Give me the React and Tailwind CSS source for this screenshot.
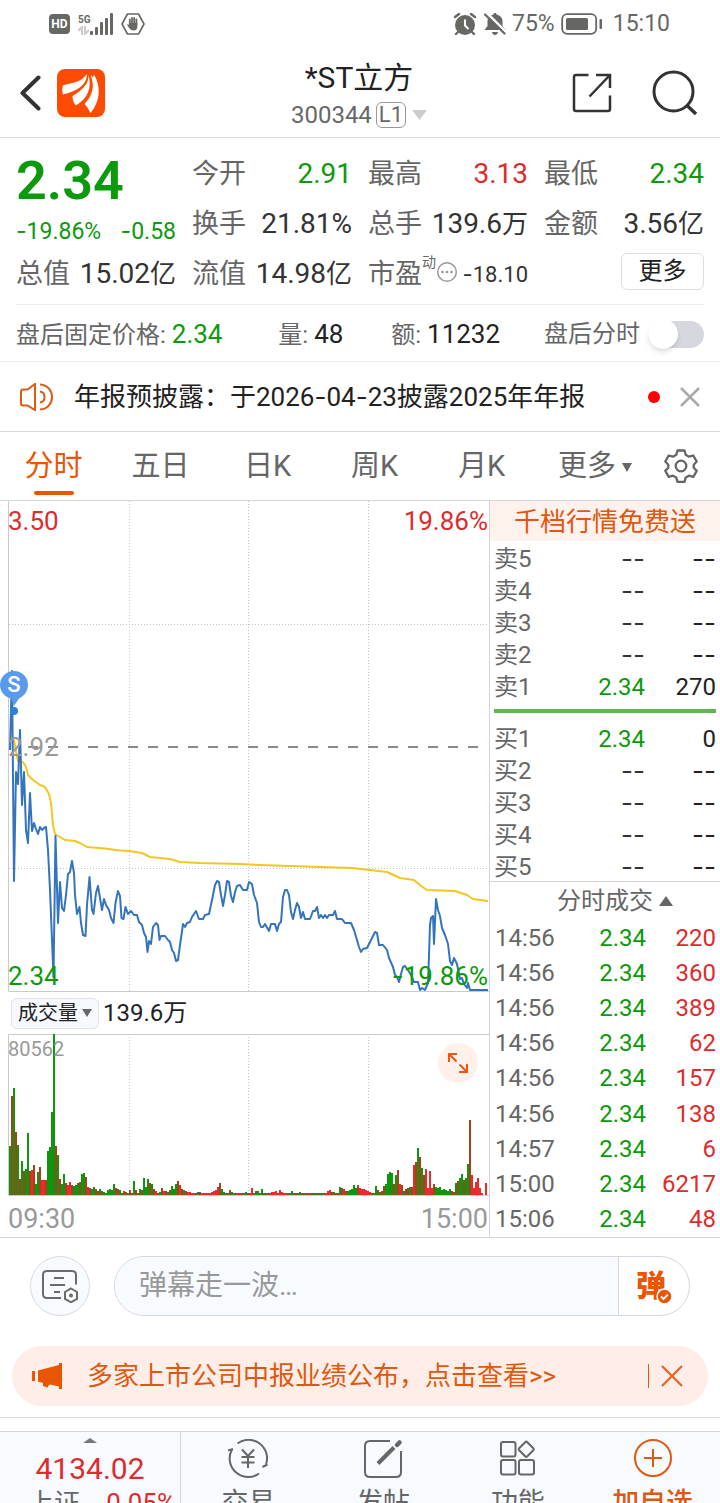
import { useState } from "react";

const PRICE_LINE =
  "10,750 12,671 14,881 16,772 18,784 20,730 22,805 24,772 26,830 28,843 30,793 32,831 34,823 36,829 38,834 40,827 42,830 44,828 46,827 48,850 50,890 52,940 53.5,977 55.5,836 58,923 60,882 62,908 64,911 66,895 68,874 70,872 72,861 74,873 75,895 77,914 79.5,907 81,923 83,935 85.5,936 87,905 89.5,877 92,910 93.5,914 96,893 98,886 100,898 102,910 104,899 106,905 109,910 111,918 113.5,923 115.5,903 118,891 120,896 121.5,918 123.5,919 125.5,907 128,914 131,911 134,915 137,915 139,922 142,925 144,933 146,937 147.5,952 149,941 151,944 153,927 156,923 158,925 159.5,940 161,936 165,936 168,940 170,942 172,950 174,953 176,961 178,960 180,945 183,924 185,927 187,923 190,922 192,917 196,911 199,919 203,919 205,915 209,914 212,900 215,885 217,881 219,882 221,895 223,906 225,895 227,881 229,882 231,896 233,902 235,892 237,886 240,885 243,890 247,890 249,882 252,884 254,895 257,903 259,922 261,927 263,927 265,924 269,931 271,924 275,924 277,931 279,924 281,922 283,897 285,890 287,890 289,895 291,912 293,919 295,910 297,903 299,907 301,918 303,912 305,919 310,919 313,911 315,911 317,907 319,918 321,915 323,918 325,915 327,918 329,915 333,915 335,911 337,919 342,919 345,923 351,923 354,930 357,940 359,947 361,952 363,949 367,948 371,940 375,932 377,933 379,945 383,945 387,950 389,958 393,967 395,975 397,977 399,982 401,974 403,967 405,966 408,970 411,975 414,982 418,982 420,990 422,988 425,990 428,983 429,955 430,925 431,918 433,916 434,944 436,899 438,910 440,916 442,928 445,935 448,944 450,961 452,965 454,958 457,964 460,979 462,978 464,984 467,988 468,983 470,990 488,990";

const AVG_LINE =
  "14,740 16,752 18,761 23,762 26,767 28,775 33,780 40,785 45,787 49,794 51,803 53,825 55,834 60,837 65,840 75,841 80,843 87,847 105,848.5 120,850.5 129,851 142,853 150,857 170,859 180,862 200,863 240,864 260,865 320,867 352,868 370,870 387,872 400,878 414,880 421,886 427,890 455,891 467,895 473,899 488,901";

// one bar per minute, r = up, g = down
const VOLUME =
  "g49 r99 g107 r63 g50 r16 g34 r24 g26 g62 r24 r25 r30 g11 g23 r28 r15 r15 r15 g44 g48 g83 g161 r49 g40 r16 g11 g21 r12 r10 r13 r10 g9 g10 g12 r13 g21 g22 r18 r8 r7 g6 g8 r6 r4 g6 r4 g3 g2 g5 g6 g5 g11 r7 r6 g5 g2 r4 r3 g2 r5 r2 g14 r5 r2 g6 r5 g17 g8 g16 r12 g11 r6 r4 r2 g3 r7 r4 r4 g3 r5 g9 g6 g11 r14 r10 r6 g5 r4 r3 r3 r2 r2 r2 g3 r3 r2 r2 r2 r2 r2 r3 r4 r5 r8 r12 g6 g3 r2 g2 r5 g3 g2 r2 r2 r2 r2 g2 g3 r2 r2 r7 r2 g4 g4 g2 g6 r2 g2 r2 r2 r3 r3 r4 r2 r5 r3 r2 r2 r2 g2 g4 r2 r2 g2 g3 r2 r2 g2 r2 r2 r2 g2 g2 r2 g2 g2 r2 r2 r4 r5 r3 g3 r2 r2 g8 r7 r6 r4 g4 g5 g6 g10 g7 r10 r7 r6 r6 r5 r4 r3 r2 g2 g9 r5 g3 r4 r9 g11 g21 g23 g22 r11 g20 r25 r11 r10 g4 r6 r7 g8 r8 r30 r33 g47 r38 g27 r20 r26 r7 r24 r7 r11 g8 g7 g8 g5 g6 g5 g4 g6 r4 r3 g12 r14 g17 g21 r15 g17 g31 r75 r20 r7 r13 r17 r7 r2 r0 r12"
    .split(" ")
    .map((v) => ({ up: v[0] === "r", value: Number(v.slice(1)) }));

const TABS = ["分时", "五日", "日K", "周K", "月K"];

const SELLS = [
  ["卖5", "--", "--"],
  ["卖4", "--", "--"],
  ["卖3", "--", "--"],
  ["卖2", "--", "--"],
  ["卖1", "2.34", "270"],
];

const BUYS = [
  ["买1", "2.34", "0"],
  ["买2", "--", "--"],
  ["买3", "--", "--"],
  ["买4", "--", "--"],
  ["买5", "--", "--"],
];

const TRADES = [
  ["14:56", "2.34", "220"],
  ["14:56", "2.34", "360"],
  ["14:56", "2.34", "389"],
  ["14:56", "2.34", "62"],
  ["14:56", "2.34", "157"],
  ["14:56", "2.34", "138"],
  ["14:57", "2.34", "6"],
  ["15:00", "2.34", "6217"],
  ["15:06", "2.34", "48"],
];

// Inter has the wider dash
function Dash() {
  return <span className="font-['Inter']">-</span>;
}

function StatusBar() {
  return (
    <div className="flex h-12 items-center justify-between pl-[49px] pr-[50px] text-[#666864]">
      <div className="flex items-center gap-2">
        <span className="flex h-5 w-[21px] items-center justify-center rounded bg-[#666864] text-xs font-bold text-white">HD</span>
        <div className="flex items-end">
          <div className="w-3">
            <div className="text-[10px] leading-3 font-bold">5G</div>
            <svg width="11" height="9" viewBox="0 0 11 9" fill="none" stroke="#cfc9c9" strokeWidth="2">
              <path d="M4 9V1L0 5M7 0v8l4-4" />
            </svg>
          </div>
          <svg width="23" height="22" viewBox="0 0 23 22" fill="currentColor">
            <rect x="0" y="18" width="3" height="4" rx="1" />
            <rect x="5" y="14" width="3" height="8" rx="1" />
            <rect x="10" y="9" width="3" height="13" rx="1" />
            <rect x="15" y="5" width="3" height="17" rx="1" />
            <rect x="20" y="0" width="3" height="22" rx="1" />
          </svg>
        </div>
        <svg width="24" height="22" viewBox="0 0 24 22" fill="none" stroke="currentColor">
          <path d="M6.500 1h11L23 11l-5.500 10h-11L1 11z" strokeWidth="1.600" strokeLinejoin="round" />
          <path d="M8.800 12V6.500M11 11V5M13.200 11V5M15.400 12V6.500" strokeWidth="1.800" strokeLinecap="round" />
          <path d="M8 10h8.300v4c0 2-1.300 3.500-3.500 3.500-2.500 0-3.800-1-5-3L6 11.800c.8-.8 1.500-.5 2 .2z" fill="currentColor" stroke="none" />
        </svg>
      </div>
      <div className="flex items-center text-[23px] leading-8">
        <svg className="mr-[7px]" width="24" height="22" viewBox="0 0 24 22" fill="none" stroke="currentColor">
          <circle cx="12" cy="12" r="10" fill="currentColor" stroke="none" />
          <path d="M2 4l4-3M22 4l-4-3M5 19l-2 2M19 19l2 2" strokeWidth="2.400" strokeLinecap="round" />
          <path d="M12 6.500v6l3.500 3.500" stroke="white" strokeWidth="2" />
        </svg>
        <svg className="mr-[6px]" width="22" height="22" viewBox="0 0 22 22">
          <path d="M11 0c1 0 1.600.7 1.600 1.600C16.500 2.500 18.500 5 18.500 8v5l3 4H.5l3-4V8c0-3 2-5.500 5.900-6.400C9.400.7 10 0 11 0zM8 19h6c-.5 4-5.500 4-6 0z" fill="currentColor" />
          <path d="M3 0l20 20" stroke="white" strokeWidth="2.500" />
          <path d="M1 1.500l19.500 19" stroke="currentColor" strokeWidth="2.200" strokeLinecap="round" />
        </svg>
        <span>75%</span>
        <svg className="ml-1.5 mr-2.5" width="42" height="22" viewBox="0 0 42 22" fill="none">
          <rect x="1.200" y="1.200" width="34" height="19.600" rx="5" stroke="currentColor" strokeWidth="1.800" />
          <rect x="5" y="5" width="22" height="12" rx="1.500" fill="currentColor" />
          <rect x="38.500" y="6" width="2.500" height="10" rx="1" fill="currentColor" />
        </svg>
        <span>15:10</span>
      </div>
    </div>
  );
}

function Header() {
  return (
    <header className="grid h-[90px] grid-cols-[1fr_auto_1fr] items-center border-b border-[#d9d9e0] pl-5 pr-[22px]">
      <div className="flex items-center gap-4">
        <button aria-label="返回">
          <svg width="21" height="36" viewBox="0 0 21 36" fill="none" stroke="#333" strokeWidth="4" strokeLinecap="round" strokeLinejoin="round">
            <path d="M18.500 2.500L2.500 18l16 15.500" />
          </svg>
        </button>
        <svg width="48" height="48" viewBox="0 0 48 48">
          <rect width="48" height="48" rx="8" fill="#ff4a04" />
          <path d="M6 16.500C14 13.500 23 14.500 30 5c0 10-8 16.500-24 20.500-1-3-1-6 0-9z" fill="white" />
          <path d="M31.500 5.500C32 14 27 20 15.500 27c0 4 1 7 3.500 9.500C31 29 35 19 31.500 5.500z" fill="white" />
          <path d="M33.500 5.500C38 17 36 26 27.500 35c2.500 2.500 4.500 6 6 9C43 33 44.500 18 37 5.500l-1 3z" fill="white" />
        </svg>
      </div>
      <div className="pt-1.5 text-center">
        <h1 className="text-[30px] leading-[38px] text-[#222]">*ST立方</h1>
        <div className="flex items-center gap-1 text-2xl leading-9 text-[#686868]">
          <span>300344</span>
          <span className="rounded-md border border-[#999] px-0.5 text-[22px] leading-6">L1</span>
          <svg className="ml-0.5" width="15" height="10" viewBox="0 0 15 10">
            <path d="M0 0h15L7.500 10z" fill="#ccc" />
          </svg>
        </div>
      </div>
      <div className="flex items-center justify-end gap-10">
        <button aria-label="分享">
          <svg width="40" height="40" viewBox="0 0 40 40" fill="none" stroke="#333" strokeWidth="2.500">
            <path d="M16.500 2H4Q2 2 2 4v32q0 2 2 2h32q2 0 2-2V22.500M24 2h14v13M38 2L17.500 23.500" />
          </svg>
        </button>
        <button aria-label="搜索">
          <svg width="46" height="46" viewBox="0 0 46 46" fill="none" stroke="#333" strokeWidth="3">
            <circle cx="21.500" cy="21.500" r="19.500" />
            <path d="M35 35.500l9 8.500" strokeWidth="3.500" />
          </svg>
        </button>
      </div>
    </header>
  );
}

function Stat({ label, value, color = "text-[#333]" }) {
  return (
    <div className="flex items-center justify-between whitespace-nowrap">
      <span className="text-[27px] text-[#666]">{label}</span>
      <span className={`text-[28px] ${color}`}>
        {value.replace(/[万亿]/, "")}
        <span className="text-[26px]">{value.match(/[万亿]/)}</span>
      </span>
    </div>
  );
}

function Quote() {
  const [after, setAfter] = useState(false);
  return (
    <section className="border-b border-[#ececec] px-4">
      <div className="grid grid-cols-4 grid-rows-[50px_50px_50px] gap-x-4 border-b border-[#ececec] pt-[11px] pb-[5px]">
        <div className="row-span-2 text-[#0c9a0c]">
          <div className="pt-1.5 text-[54px] leading-[52px] font-semibold">2.34</div>
          <div className="flex justify-between pt-2.5 text-[23px] leading-7 whitespace-nowrap">
            <span><Dash />19.86%</span>
            <span><Dash />0.58</span>
          </div>
        </div>
        <Stat label="今开" value="2.91" color="text-[#0c9a0c]" />
        <Stat label="最高" value="3.13" color="text-[#dd2c2c]" />
        <Stat label="最低" value="2.34" color="text-[#0c9a0c]" />
        <Stat label="换手" value="21.81%" />
        <Stat label="总手" value="139.6万" />
        <Stat label="金额" value="3.56亿" />
        <Stat label="总值" value="15.02亿" />
        <Stat label="流值" value="14.98亿" />
        <div className="flex items-center justify-between whitespace-nowrap">
          <span className="flex items-center text-[27px] text-[#666]">
            市盈<sup className="top-0 self-start text-[14px] leading-4">动</sup>
            <svg className="mb-1" width="22" height="22" viewBox="0 0 22 22" fill="#999">
              <circle cx="11" cy="11" r="9.300" fill="none" stroke="#999" strokeWidth="1.500" />
              <circle cx="6.500" cy="11" r="1.300" />
              <circle cx="11" cy="11" r="1.300" />
              <circle cx="15.500" cy="11" r="1.300" />
            </svg>
          </span>
          <span className="text-[22px] text-[#333]"><Dash />18.10</span>
        </div>
        <div className="flex items-center justify-end pb-1.5">
          <button className="h-[37px] w-[83px] rounded-md border border-[#dddde2] text-2xl leading-8 text-[#222]">更多</button>
        </div>
      </div>
      <div className="flex h-14 items-center justify-between pt-0.5 text-2xl whitespace-nowrap text-[#666]">
        <span>盘后固定价格: <span className="text-[26px] text-[#0c9a0c]">2.34</span></span>
        <span className="pl-3">量: <span className="text-[26px] text-[#222]">48</span></span>
        <span className="pl-1">额: <span className="text-[26px] text-[#222]">11232</span></span>
        <label className="flex items-center gap-2">
          盘后分时
          <span className="relative flex items-center">
            <input type="checkbox" checked={after} onChange={() => setAfter(!after)} className="peer h-[27px] w-14 appearance-none rounded-full bg-[#d6d7df] checked:bg-[#ea5504]" />
            <span className="pointer-events-none absolute left-0 size-[30px] rounded-full bg-white shadow-md peer-checked:left-7" />
          </span>
        </label>
      </div>
    </section>
  );
}

function Notice() {
  return (
    <section className="flex h-[70px] items-center border-b border-[#d9d9d9] pl-5 pr-[19px]">
      <svg width="34" height="28" viewBox="0 0 34 28" fill="none" stroke="#dd5a14" strokeWidth="2">
        <path d="M15 1v26L7.500 22.500H3q-2 0-2-2v-12q0-2 2-2h4.500z" />
        <path d="M20 8.500c6 .8 6 10.200 0 11M20 1.500c16 1 16 24 0 25" />
      </svg>
      <p className="flex-1 pl-5 text-[26px] whitespace-nowrap text-[#222]">
        年报预披露：于2026<Dash />04<Dash />23披露2025年年报
      </p>
      <span className="mr-[19px] size-3 rounded-full bg-[#fe0000]" />
      <button aria-label="关闭公告">
        <svg width="22" height="22" viewBox="0 0 22 22" stroke="#aaa" strokeWidth="2.500">
          <path d="M2 2l18 18M20 2L2 20" />
        </svg>
      </button>
    </section>
  );
}

function Tabs() {
  const [active, setActive] = useState("分时");
  return (
    <nav className="flex h-[69px] border-b border-[#d4d4de] pr-[13px] text-[29px] text-[#666]">
      {TABS.map((tab) => (
        <button key={tab} onClick={() => setActive(tab)} className={`relative flex-1 pt-0.5 ${active === tab ? "text-[#ea5504]" : ""}`}>
          {tab}
          {active === tab && <span className="absolute bottom-[5px] left-1/2 h-1 w-10 -translate-x-1/2 rounded-full bg-[#ea5504]" />}
        </button>
      ))}
      <button className="flex w-30 items-center justify-center gap-1.5 pt-0.5">
        更多
        <svg width="10" height="9" viewBox="0 0 10 9">
          <path d="M0 0h10L5 9z" fill="#666" />
        </svg>
      </button>
      <button aria-label="设置" className="flex w-[52px] items-center justify-center">
        <svg width="34" height="34" viewBox="0 0 34 34" fill="none" stroke="#666" strokeWidth="2.300" strokeLinejoin="round">
          <path d="M13.500 1.500h7l1.200 4.300 3.300 1.900 4.300-1.200 3.400 6-3 3.200v3l3 3.200-3.400 6-4.300-1.200-3.300 1.900-1.200 4.300h-7l-1.200-4.300L9 26.700l-4.300 1.200-3.400-6 3-3.200v-3l-3-3.200 3.400-6L9 7.700l3.300-1.900z" />
          <circle cx="17" cy="17" r="5.300" />
        </svg>
      </button>
    </nav>
  );
}

function PriceChart() {
  return (
    <div className="relative text-[26px] leading-8">
      <svg className="block h-[491px] w-full" viewBox="0 501 489 491" preserveAspectRatio="none" fill="none">
        <g stroke="#c6c6c6" strokeDasharray="1 2">
          <path d="M129.500 501v490M248.500 501v490M368.500 501v490M9 624.500h480M9 868.500h480" />
        </g>
        <path d="M8.500 501v490.500H489" stroke="#c9c9ce" />
        <path d="M28 747h452" stroke="#8a8a8a" strokeWidth="2" strokeDasharray="10 10" />
        <polyline points={AVG_LINE} stroke="#f3c71f" strokeWidth="2" strokeLinejoin="round" />
        <polyline points={PRICE_LINE} stroke="#3474bd" strokeWidth="2" strokeLinejoin="round" />
        <path d="M0 685a14 14 0 1 1 28 0c0 7-5 11.500-9 13.500l-5 7.500-3-7.500C5 697 0 692 0 685z" fill="#5a9aec" />
        <circle cx="14" cy="711" r="4" fill="#2d7fe0" />
      </svg>
      <span className="absolute top-[172px] left-0 w-7 text-center text-[22px] leading-6 font-medium text-white">S</span>
      <span className="absolute top-1 left-2 text-[#dd2c2c]">3.50</span>
      <span className="absolute top-1 right-px text-[#dd2c2c]">19.86%</span>
      <span className="absolute top-[230px] left-2 text-[#999]">2.92</span>
      <span className="absolute bottom-0 left-2 text-[#0c9a0c]">2.34</span>
      <span className="absolute right-px bottom-0 text-[#0c9a0c]"><Dash />19.86%</span>
    </div>
  );
}

function barColor(i) {
  const { up } = VOLUME[i];
  if (!up) return "#0f960f";
  const mixed = (VOLUME[i - 1] && !VOLUME[i - 1].up) || (VOLUME[i + 1] && !VOLUME[i + 1].up);
  return mixed ? "#a8401c" : "#ec2a2a";
}

function VolumeChart() {
  return (
    <div>
      <div className="flex h-[42px] items-center gap-1 pl-[11px] text-2xl text-[#222]">
        <button className="flex h-[31px] items-center gap-1 rounded-md border border-[#e0e2ea] bg-[#f7f9fe] px-1.5 text-[20px]">
          成交量
          <svg width="10" height="8" viewBox="0 0 10 8">
            <path d="M0 0h10L5 8z" fill="#666" />
          </svg>
        </button>
        <span>139.6万</span>
      </div>
      <div className="relative">
        <svg className="block h-[162px] w-full" viewBox="0 0 489 162" preserveAspectRatio="none" fill="none">
          <path d="M129.500 0v161M248.500 0v161M368.500 0v161" stroke="#c6c6c6" strokeDasharray="1 2" />
          <path d="M489 .5H8.500v161H489" stroke="#c9c9ce" />
          {VOLUME.map((v, i) => (
            <rect key={i} x={9 + i * 2} y={161 - v.value} width="2" height={v.value} fill={barColor(i)} />
          ))}
        </svg>
        <span className="absolute top-[3px] left-2 text-xl leading-6 text-[#999]">80562</span>
        <button aria-label="放大" className="absolute top-[9px] right-[11px] flex size-10 items-center justify-center rounded-full bg-[#fff0ea]">
          <svg width="20" height="20" viewBox="0 0 20 20" fill="none" stroke="#e5591a" strokeWidth="2">
            <path d="M9 1H1v8M1 1l7.500 7.500M11 19h8v-8M19 19l-7.500-7.500" />
          </svg>
        </button>
      </div>
      <div className="flex h-[41px] items-center justify-between pt-1 pr-px pl-2 text-[27px] leading-8 text-[#999]">
        <span>09:30</span>
        <span>15:00</span>
      </div>
    </div>
  );
}

function OrderTable({ rows }) {
  return (
    <table className="w-full text-2xl leading-8">
      <tbody>
        {rows.map(([name, price, qty]) => (
          <tr key={name} className="h-8">
            <td className="p-0 text-[#666]">{name}</td>
            <td className={`p-0 text-right ${price === "--" ? "font-['Inter'] text-[26px] leading-8 text-[#333]" : "text-[#0c9a0c]"}`}>{price}</td>
            <td className={`w-[71px] p-0 text-right text-[#222] ${qty === "--" ? "font-['Inter'] text-[26px] leading-8" : ""}`}>{qty}</td>
          </tr>
        ))}
      </tbody>
    </table>
  );
}

function OrderBook() {
  return (
    <aside className="w-[231px] shrink-0 border-l border-[#d4d4de]">
      <a href="#level2" className="block bg-[#fff1ec] pt-0.5 text-center text-[26px] leading-[38px] text-[#e0570f]">千档行情免费送</a>
      <div className="h-[341px] border-b border-[#d4d4de] pt-0.5 pr-1 pl-1">
        <OrderTable rows={SELLS} />
        <div className="mt-1.5 mb-2.5 h-1 bg-[#62b553]" />
        <OrderTable rows={BUYS} />
      </div>
      <button className="flex h-[38px] w-full items-center justify-center gap-1.5 pl-5 text-2xl text-[#666]">
        分时成交
        <svg width="14" height="10" viewBox="0 0 14 10">
          <path d="M0 10h14L7 0z" fill="#666" />
        </svg>
      </button>
      <table className="h-[317px] w-full text-2xl">
        <tbody>
          {TRADES.map(([time, price, qty], i) => (
            <tr key={i}>
              <td className="p-0 pl-[5px] text-[#666]">{time}</td>
              <td className="p-0 text-right text-[#0c9a0c]">{price}</td>
              <td className="w-[74px] p-0 pr-1 text-right text-[#dd2c2c]">{qty}</td>
            </tr>
          ))}
        </tbody>
      </table>
    </aside>
  );
}

function Danmu() {
  return (
    <section className="flex gap-6 px-[30px] py-[18px]">
      <button aria-label="弹幕设置" className="flex size-15 shrink-0 items-center justify-center rounded-full border border-[#d9d9e2] bg-[#f7faff]">
        <svg width="38" height="34" viewBox="0 0 38 34" fill="none" stroke="#6b6b6b" strokeWidth="2">
          <path d="M20 29H6q-4 0-4-4V6q0-4 4-4h25q4 0 4 4v9.500" />
          <path d="M13 9h10M9 16h15M13 23h6" />
          <path d="M30 19.500l6 3.500v7l-6 3.300-6-3.300v-7z" />
          <circle cx="30" cy="26.500" r="2" fill="#6b6b6b" stroke="none" />
        </svg>
      </button>
      <div className="flex h-15 flex-1 overflow-hidden rounded-full border border-[#d3d5e0]">
        <input aria-label="弹幕" placeholder="弹幕走一波…" className="min-w-0 flex-1 bg-[#f7faff] pl-6 text-[28px] text-[#333] outline-none placeholder:text-[#999]" />
        <button className="relative w-[71px] border-l border-[#d3d5e0] pr-1.5 text-[30px] leading-none font-black text-[#ea5504]">
          弹
          <svg className="absolute right-4 bottom-2.5" width="17" height="17" viewBox="0 0 17 17" fill="none">
            <circle cx="8.500" cy="8.500" r="7.500" fill="#ea5504" stroke="white" strokeWidth="1.500" />
            <path d="M5 8.500l2.500 2.500L12 6.500" stroke="white" strokeWidth="1.800" />
          </svg>
        </button>
      </div>
    </section>
  );
}

function Banner() {
  return (
    <div className="border-b border-[#d9d9de] px-3 pt-3 pb-[11px]">
      <div className="flex h-15 items-center rounded-full bg-[#ffeee7] pr-6 pl-5 text-[#df5810]">
        <svg width="31" height="26" viewBox="0 0 31 26" fill="#ea5504">
          <path d="M0 8h3v10H0zM6 7.500L27 2V0h3v26h-3v-2.500l-9-2-2 1.500v1.500l-5-1.500v-3l-5-1.500z" />
        </svg>
        <a href="#report" className="flex-1 pl-6 text-[26px] whitespace-nowrap">多家上市公司中报业绩公布，点击查看&gt;&gt;</a>
        <span className="mr-[11px] h-6 w-px bg-[#df5810]" />
        <button aria-label="关闭提示">
          <svg width="24" height="24" viewBox="0 0 24 24" stroke="#e4622a" strokeWidth="2.200">
            <path d="M2 2l20 20M22 2L2 22" />
          </svg>
        </button>
      </div>
    </div>
  );
}

function NavItem({ label, color = "text-[#666]", children }) {
  return (
    <button className={`flex flex-1 flex-col items-center pt-[7px] text-[27px] leading-9 ${color}`}>
      <svg className="mb-1.5 shrink-0" width="40" height="40" viewBox="0 0 40 40" fill="none" stroke="currentColor" strokeWidth="2">
        {children}
      </svg>
      {label}
    </button>
  );
}

function BottomNav() {
  return (
    <footer className="mt-[13px] flex border-t border-[#d4d4da] bg-[#f7faff]">
      <button className="flex w-[181px] shrink-0 flex-col items-center border-r border-[#d4d4da] pt-1.5 text-[#dd2c2c]">
        <svg width="14" height="5" viewBox="0 0 14 5">
          <path d="M0 5h14L7 0z" fill="#777" />
        </svg>
        <span className="pt-2 text-[30px] leading-9">4134.02</span>
        <span className="flex w-full justify-between pr-1 pl-7 text-[26px] leading-8">
          <span className="text-[#666]">上证</span>
          <span>0.05%</span>
        </span>
      </button>
      <NavItem label="交易">
        <path d="M9.500 4.500a18.500 18.500 0 0 1 28.500 21M31 34.500A18.500 18.500 0 0 1 4 10.500M0 11.500l5-1.500M34.500 28l5-2.500" />
        <path d="M14 10.500l6 6.500 6-6.500M20 17v12M13.500 18h13M13.500 23.500h13" />
      </NavItem>
      <NavItem label="发帖">
        <path d="M27 2H7Q2 2 2 7v26q0 5 5 5h26q5 0 5-5V12" />
        <path d="M15 24.500L31 8.500" strokeWidth="4" />
        <path d="M34 6l2.500-2.500" strokeWidth="4.500" strokeLinecap="round" />
      </NavItem>
      <NavItem label="功能">
        <rect x="3" y="3" width="14.500" height="14.500" rx="2" />
        <rect x="3" y="21" width="14.500" height="14.500" rx="2" />
        <rect x="21" y="21" width="15" height="14.500" rx="2" />
        <rect x="22.500" y="4.500" width="11.500" height="11.500" rx="1.500" transform="rotate(45 28.250 10.250)" />
      </NavItem>
      <NavItem label="加自选" color="font-medium text-[#df5810]">
        <circle cx="20" cy="19" r="18" />
        <path d="M20 10v18M11 19h18" />
      </NavItem>
    </footer>
  );
}

export default function App() {
  return (
    <div className="h-screen overflow-hidden bg-white font-['Roboto','Noto_Sans_CJK_SC',sans-serif]">
      <StatusBar />
      <Header />
      <Quote />
      <Notice />
      <Tabs />
      <main className="flex border-b border-[#d4d4de]">
        <div className="min-w-0 flex-1">
          <PriceChart />
          <VolumeChart />
        </div>
        <OrderBook />
      </main>
      <Danmu />
      <Banner />
      <BottomNav />
    </div>
  );
}
